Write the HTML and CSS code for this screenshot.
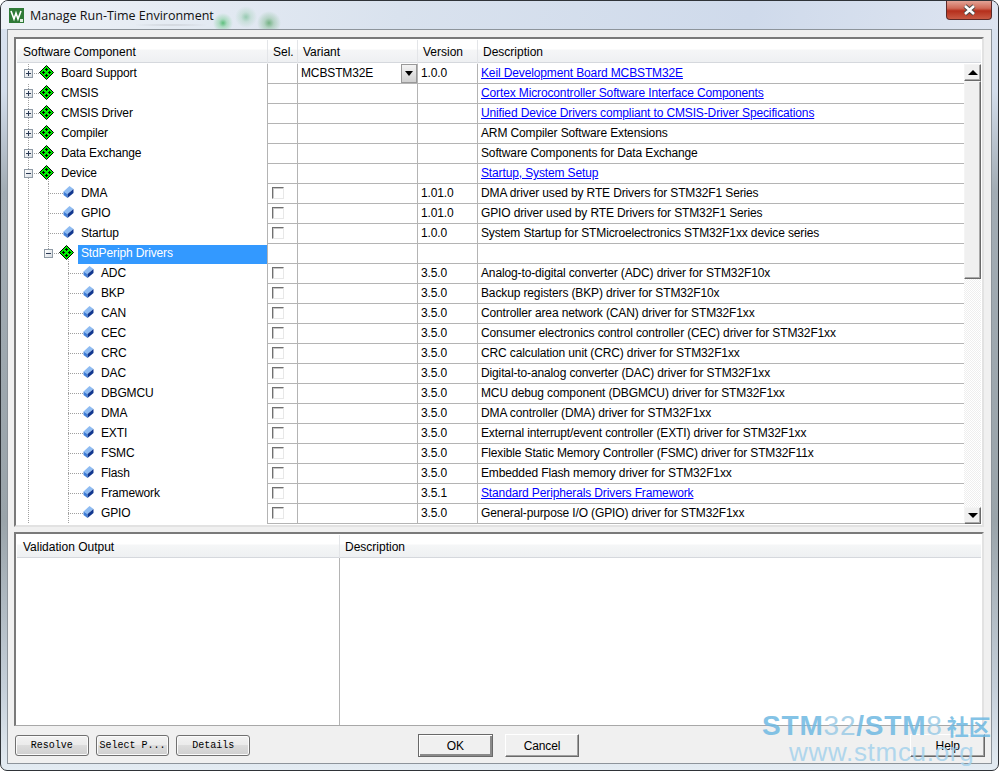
FILE: index.html
```html
<!DOCTYPE html>
<html lang="en">
<head>
    <meta charset="UTF-8">
    <title>Manage Run-Time Environment</title>
    <link rel="stylesheet" href="styles.css">
</head>
<body>
    <svg class="defs" width="0" height="0">
        <symbol id="diamond" viewBox="0 0 15 15">
            <path d="M7.5 .5 14.5 7.5 7.5 14.5 .5 7.5Z" fill="#00f000" stroke="#000"/>
            <path d="M7 3h1v1h1v1H8v1H7V5H6V4h1zM4 6h1v1h1v1H5v1H4V8H3V7h1zM10 6h1v1h1v1h-1v1h-1V8H9V7h1zM7 9h1v1h1v1H8v1H7v-1H6v-1h1z" fill="#000"/>
        </symbol>
        <symbol id="bar" viewBox="0 0 11 13">
            <path d="M6.5 0 10.5 3 4.5 8 .5 5.5Z" fill="#8fbcf2"/>
            <path d="M.5 5.5 4.5 8 4.5 12 .5 9Z" fill="#3f7fd8"/>
            <path d="M10.5 3 4.5 8 4.5 12 10.5 7Z" fill="#12388f"/>
        </symbol>
    </svg>

    <div class="window">
        <div class="titlebar">
            <svg class="app-icon" width="15" height="15" viewBox="0 0 15 15">
                <rect width="15" height="15" fill="#2f7a37"/>
                <path d="M2 3 5 11 7 5 9 11 12 3" fill="none" stroke="#fff" stroke-width="1.6"/>
                <rect x="11" y="11" width="3" height="3" fill="#dfeee0"/>
            </svg>
            <span class="title-text">Manage Run-Time Environment</span>
            <div class="close">
                <svg width="15" height="12" viewBox="0 0 15 12">
                    <path d="M3 2 12 10M12 2 3 10" stroke="#4a4a4a" stroke-width="4.4"/>
                    <path d="M3 2 12 10M12 2 3 10" stroke="#fff" stroke-width="2.6"/>
                </svg>
            </div>
        </div>

        <div class="client">
            <div class="pane pane-top">
                <div class="header comp-cols">
                    <div class="th first">Software Component</div>
                    <div class="th">Sel.</div>
                    <div class="th">Variant</div>
                    <div class="th">Version</div>
                    <div class="th last">Description</div>
                </div>
                <div class="grid-wrap">
                    <div class="rows">
                        <div class="row"><div class="tree lv0"><i class="v a top-half"></i><i class="h"></i><b class="exp plus"></b><svg class="dia"><use href="#diamond"/></svg><span class="label">Board Support</span></div><div class="cell"></div><div class="cell variant">MCBSTM32E<span class="drop"></span></div><div class="cell">1.0.0</div><div class="cell"><a href="#">Keil Development Board MCBSTM32E</a></div></div>
                        <div class="row"><div class="tree lv0"><i class="v a"></i><i class="h"></i><b class="exp plus"></b><svg class="dia"><use href="#diamond"/></svg><span class="label">CMSIS</span></div><div class="cell"></div><div class="cell"></div><div class="cell"></div><div class="cell"><a href="#">Cortex Microcontroller Software Interface Components</a></div></div>
                        <div class="row"><div class="tree lv0"><i class="v a"></i><i class="h"></i><b class="exp plus"></b><svg class="dia"><use href="#diamond"/></svg><span class="label">CMSIS Driver</span></div><div class="cell"></div><div class="cell"></div><div class="cell"></div><div class="cell"><a href="#">Unified Device Drivers compliant to CMSIS-Driver Specifications</a></div></div>
                        <div class="row"><div class="tree lv0"><i class="v a"></i><i class="h"></i><b class="exp plus"></b><svg class="dia"><use href="#diamond"/></svg><span class="label">Compiler</span></div><div class="cell"></div><div class="cell"></div><div class="cell"></div><div class="cell">ARM Compiler Software Extensions</div></div>
                        <div class="row"><div class="tree lv0"><i class="v a"></i><i class="h"></i><b class="exp plus"></b><svg class="dia"><use href="#diamond"/></svg><span class="label">Data Exchange</span></div><div class="cell"></div><div class="cell"></div><div class="cell"></div><div class="cell">Software Components for Data Exchange</div></div>
                        <div class="row"><div class="tree lv0"><i class="v a"></i><i class="v b bottom-half"></i><i class="h"></i><b class="exp"></b><svg class="dia"><use href="#diamond"/></svg><span class="label">Device</span></div><div class="cell"></div><div class="cell"></div><div class="cell"></div><div class="cell"><a href="#">Startup, System Setup</a></div></div>
                        <div class="row"><div class="tree lv1"><i class="v a"></i><i class="v b"></i><i class="h"></i><svg class="bar"><use href="#bar"/></svg><span class="label">DMA</span></div><div class="cell"><span class="check"></span></div><div class="cell"></div><div class="cell">1.01.0</div><div class="cell">DMA driver used by RTE Drivers for STM32F1 Series</div></div>
                        <div class="row"><div class="tree lv1"><i class="v a"></i><i class="v b"></i><i class="h"></i><svg class="bar"><use href="#bar"/></svg><span class="label">GPIO</span></div><div class="cell"><span class="check"></span></div><div class="cell"></div><div class="cell">1.01.0</div><div class="cell">GPIO driver used by RTE Drivers for STM32F1 Series</div></div>
                        <div class="row"><div class="tree lv1"><i class="v a"></i><i class="v b"></i><i class="h"></i><svg class="bar"><use href="#bar"/></svg><span class="label">Startup</span></div><div class="cell"><span class="check"></span></div><div class="cell"></div><div class="cell">1.0.0</div><div class="cell">System Startup for STMicroelectronics STM32F1xx device series</div></div>
                        <div class="row"><div class="tree lv2"><i class="v a"></i><i class="v b top-half"></i><i class="v c bottom-half"></i><i class="h"></i><b class="exp"></b><svg class="dia"><use href="#diamond"/></svg><span class="label selected">StdPeriph Drivers</span></div><div class="cell"></div><div class="cell"></div><div class="cell"></div><div class="cell"></div></div>
                        <div class="row"><div class="tree lv3"><i class="v a"></i><i class="v c"></i><i class="h"></i><svg class="bar"><use href="#bar"/></svg><span class="label">ADC</span></div><div class="cell"><span class="check"></span></div><div class="cell"></div><div class="cell">3.5.0</div><div class="cell">Analog-to-digital converter (ADC) driver for STM32F10x</div></div>
                        <div class="row"><div class="tree lv3"><i class="v a"></i><i class="v c"></i><i class="h"></i><svg class="bar"><use href="#bar"/></svg><span class="label">BKP</span></div><div class="cell"><span class="check"></span></div><div class="cell"></div><div class="cell">3.5.0</div><div class="cell">Backup registers (BKP) driver for STM32F10x</div></div>
                        <div class="row"><div class="tree lv3"><i class="v a"></i><i class="v c"></i><i class="h"></i><svg class="bar"><use href="#bar"/></svg><span class="label">CAN</span></div><div class="cell"><span class="check"></span></div><div class="cell"></div><div class="cell">3.5.0</div><div class="cell">Controller area network (CAN) driver for STM32F1xx</div></div>
                        <div class="row"><div class="tree lv3"><i class="v a"></i><i class="v c"></i><i class="h"></i><svg class="bar"><use href="#bar"/></svg><span class="label">CEC</span></div><div class="cell"><span class="check"></span></div><div class="cell"></div><div class="cell">3.5.0</div><div class="cell">Consumer electronics control controller (CEC) driver for STM32F1xx</div></div>
                        <div class="row"><div class="tree lv3"><i class="v a"></i><i class="v c"></i><i class="h"></i><svg class="bar"><use href="#bar"/></svg><span class="label">CRC</span></div><div class="cell"><span class="check"></span></div><div class="cell"></div><div class="cell">3.5.0</div><div class="cell">CRC calculation unit (CRC) driver for STM32F1xx</div></div>
                        <div class="row"><div class="tree lv3"><i class="v a"></i><i class="v c"></i><i class="h"></i><svg class="bar"><use href="#bar"/></svg><span class="label">DAC</span></div><div class="cell"><span class="check"></span></div><div class="cell"></div><div class="cell">3.5.0</div><div class="cell">Digital-to-analog converter (DAC) driver for STM32F1xx</div></div>
                        <div class="row"><div class="tree lv3"><i class="v a"></i><i class="v c"></i><i class="h"></i><svg class="bar"><use href="#bar"/></svg><span class="label">DBGMCU</span></div><div class="cell"><span class="check"></span></div><div class="cell"></div><div class="cell">3.5.0</div><div class="cell">MCU debug component (DBGMCU) driver for STM32F1xx</div></div>
                        <div class="row"><div class="tree lv3"><i class="v a"></i><i class="v c"></i><i class="h"></i><svg class="bar"><use href="#bar"/></svg><span class="label">DMA</span></div><div class="cell"><span class="check"></span></div><div class="cell"></div><div class="cell">3.5.0</div><div class="cell">DMA controller (DMA) driver for STM32F1xx</div></div>
                        <div class="row"><div class="tree lv3"><i class="v a"></i><i class="v c"></i><i class="h"></i><svg class="bar"><use href="#bar"/></svg><span class="label">EXTI</span></div><div class="cell"><span class="check"></span></div><div class="cell"></div><div class="cell">3.5.0</div><div class="cell">External interrupt/event controller (EXTI) driver for STM32F1xx</div></div>
                        <div class="row"><div class="tree lv3"><i class="v a"></i><i class="v c"></i><i class="h"></i><svg class="bar"><use href="#bar"/></svg><span class="label">FSMC</span></div><div class="cell"><span class="check"></span></div><div class="cell"></div><div class="cell">3.5.0</div><div class="cell">Flexible Static Memory Controller (FSMC) driver for STM32F11x</div></div>
                        <div class="row"><div class="tree lv3"><i class="v a"></i><i class="v c"></i><i class="h"></i><svg class="bar"><use href="#bar"/></svg><span class="label">Flash</span></div><div class="cell"><span class="check"></span></div><div class="cell"></div><div class="cell">3.5.0</div><div class="cell">Embedded Flash memory driver for STM32F1xx</div></div>
                        <div class="row"><div class="tree lv3"><i class="v a"></i><i class="v c"></i><i class="h"></i><svg class="bar"><use href="#bar"/></svg><span class="label">Framework</span></div><div class="cell"><span class="check"></span></div><div class="cell"></div><div class="cell">3.5.1</div><div class="cell"><a href="#">Standard Peripherals Drivers Framework</a></div></div>
                        <div class="row"><div class="tree lv3"><i class="v a"></i><i class="v c"></i><i class="h"></i><svg class="bar"><use href="#bar"/></svg><span class="label">GPIO</span></div><div class="cell"><span class="check"></span></div><div class="cell"></div><div class="cell">3.5.0</div><div class="cell">General-purpose I/O (GPIO) driver for STM32F1xx</div></div>
                    </div>
                    <div class="scrollbar">
                        <div class="sb-btn"><span class="tri-up"></span></div>
                        <div class="sb-thumb"></div>
                        <div class="sb-track"></div>
                        <div class="sb-btn"><span class="tri-down"></span></div>
                    </div>
                </div>
            </div>

            <div class="pane pane-bottom">
                <div class="header val-cols">
                    <div class="th first">Validation Output</div>
                    <div class="th last">Description</div>
                </div>
                <div class="val-body">
                    <div class="val-left"></div>
                    <div class="val-right"></div>
                </div>
            </div>

            <div class="buttons">
                <button class="btn-small">Resolve</button>
                <button class="btn-small">Select P...</button>
                <button class="btn-small">Details</button>
                <button class="btn-main btn-default">OK</button>
                <button class="btn-main">Cancel</button>
                <button class="btn-main btn-help">Help</button>
            </div>
        </div>

        <div class="watermark">
            <div class="wm-top"><b>STM</b><span class="wm-thin">32</span><b>/STM</b><span class="wm-thin">8</span><b class="wm-cjk">社区</b></div>
            <div class="wm-url">www.stmcu.org</div>
        </div>
    </div>
</body>
</html>
```

FILE: styles.css
```css
* {
    box-sizing: border-box;
}
body {
    margin: 0;
    background: #fff;
    font-family: "Liberation Sans", Arial, sans-serif;
    font-size: 12px;
    color: #000;
}
.defs {
    position: absolute;
}

/* window frame */
.window {
    position: relative;
    width: 999px;
    height: 771px;
    overflow: hidden;
    border: 1px solid #2f3338;
    border-radius: 8px 8px 7px 7px;
    background: linear-gradient(to bottom, #dbe4f1 0, #d3ddeb 90px, #a2acb4 190px, #9aa4aa 520px, #c6d0da 690px, #e4ecf3 100%);
}
.titlebar {
    display: flex;
    align-items: center;
    height: 28px;
    padding-left: 8px;
    background:
        radial-gradient(circle at 222px 22px, rgba(60,180,95,.8) 0, rgba(75,192,106,.35) 4px, rgba(75,192,106,0) 10px),
        radial-gradient(circle at 245px 16px, rgba(120,190,150,.7) 0, rgba(143,201,164,.3) 5px, rgba(143,201,164,0) 11px),
        radial-gradient(circle at 268px 22px, rgba(90,165,105,.8) 0, rgba(99,171,112,.35) 5px, rgba(99,171,112,0) 12px),
        radial-gradient(ellipse at 170px 24px, #c9cdd4 0, rgba(201,205,212,0) 40px),
        linear-gradient(100deg, #eef2f7 0, #d9e2ee 40%, #cfdaeb 75%, #dde4f0 100%);
}
.app-icon {
    flex: none;
}
.title-text {
    margin-left: 6px;
    font-family: "Open Sans", sans-serif;
    font-size: 12.5px;
    color: #111;
}
.close {
    display: flex;
    align-items: center;
    justify-content: center;
    width: 46px;
    height: 19px;
    margin-left: auto;
    margin-right: 6px;
    margin-top: -9px;
    border: 1px solid #5c2a28;
    border-top: none;
    border-radius: 0 0 4px 4px;
    background: linear-gradient(to bottom, #e3a396 0, #cf6a58 40%, #b52f1c 55%, #c85a44 100%);
}

/* client area */
.client {
    width: 985px;
    height: 735px;
    margin-left: 6px;
    padding: 7px 6px 0;
    border: 1px solid #8d949b;
    background: #f0f0f0;
}
.pane {
    width: 970px;
    padding: 1px;
    border: 2px solid;
    border-color: #7a7a7a #e2e2e2 #e2e2e2 #7a7a7a;
    background: #fff;
}
.pane-top {
    height: 490px;
}
.pane-bottom {
    height: 194px;
    margin-top: 5px;
    border-bottom: 1px solid #a8a8a8;
}

/* headers */
.header {
    display: grid;
    height: 23px;
    border-bottom: 1px solid #d5d8dd;
    background: linear-gradient(to bottom, #fff 0, #fff 9px, #f5f6f7 10px, #eef0f2 100%);
}
.comp-cols {
    grid-template-columns: 251px 30px 120px 60px 1fr;
}
.val-cols {
    grid-template-columns: 323px 1fr;
}
.th {
    padding-left: 5px;
    line-height: 24px;
    border-right: 1px solid #e3e5e8;
}
.th.first {
    padding-left: 6px;
}
.th.last {
    border-right: none;
}

/* component table */
.grid-wrap {
    display: flex;
    margin-top: 1px;
    height: 460px;
}
.rows {
    flex: 1;
    overflow: hidden;
    letter-spacing: -.13px;
}
.row {
    display: grid;
    grid-template-columns: 251px 30px 120px 60px 1fr;
    height: 20px;
}
.cell {
    position: relative;
    padding-left: 3px;
    line-height: 18px;
    white-space: nowrap;
    border-right: 1px solid #b4b4b4;
    border-bottom: 1px solid #b4b4b4;
}
.cell:last-child {
    border-right: none;
}
.cell a {
    color: #0000ff;
}
.variant {
    padding-left: 3px;
}
.drop {
    position: absolute;
    right: 0;
    top: 0;
    width: 16px;
    height: 19px;
    border: 1px solid #666;
    border-color: #fff #555 #555 #fff;
    outline: 1px solid #999;
    outline-offset: -1px;
    background: linear-gradient(to bottom, #f4f4f4, #d0d0d0);
}
.drop::after {
    content: "";
    position: absolute;
    left: 3px;
    top: 6px;
    border: 4px solid transparent;
    border-top: 5px solid #000;
    border-bottom: none;
}
.check {
    display: block;
    width: 12px;
    height: 12px;
    margin: 3px 0 0 1px;
    border: 1px solid;
    border-color: #707070 #e8e8e8 #e8e8e8 #707070;
    background: #fff;
    box-shadow: inset 1px 1px 0 #c8c8c8;
}

/* tree column */
.tree {
    position: relative;
    display: flex;
    align-items: center;
    height: 20px;
    border-right: 1px solid #b4b4b4;
}
.lv0 { padding-left: 7px; }
.lv1 { padding-left: 46px; }
.lv2 { padding-left: 27px; }
.lv3 { padding-left: 66px; }
.tree svg, .exp {
    position: relative;
    flex: none;
}
.tree svg.dia {
    width: 15px;
    height: 15px;
    margin: -3px 0 0 6px;
}
.tree svg.bar {
    width: 11px;
    height: 13px;
    margin-top: -4px;
}
.label {
    position: relative;
    margin: -2px 0 0 7px;
    line-height: 18px;
    white-space: nowrap;
}
.label.selected {
    flex: 1;
    margin: 0 0 0 4px;
    padding-left: 3px;
    height: 19px;
    line-height: 17px;
    background: #3399ff;
    color: #fff;
}
.exp {
    width: 9px;
    height: 9px;
    margin-top: -1px;
    border: 1px solid #8f9aa5;
    background: linear-gradient(135deg, #fff, #d8dde2);
}
.exp::before {
    content: "";
    position: absolute;
    left: 1px;
    top: 3px;
    width: 5px;
    height: 1px;
    background: #2a3a55;
}
.exp.plus::after {
    content: "";
    position: absolute;
    left: 3px;
    top: 1px;
    width: 1px;
    height: 5px;
    background: #2a3a55;
}

/* dotted connector lines sit under the tree icons */
.v, .h {
    position: absolute;
}
.v {
    top: 0;
    bottom: 0;
    width: 1px;
    background: repeating-linear-gradient(to bottom, #a0a0a0 0 1px, transparent 1px 2px);
}
.v.a { left: 11px; }
.v.b { left: 31px; }
.v.c { left: 51px; }
.v.top-half { bottom: 10px; }
.v.bottom-half { top: 9px; }
.h {
    top: 9px;
    height: 1px;
    background: repeating-linear-gradient(to right, #a0a0a0 0 1px, transparent 1px 2px);
}
.lv0 .h { left: 11px; width: 12px; }
.lv1 .h { left: 31px; width: 15px; }
.lv2 .h { left: 31px; width: 12px; }
.lv3 .h { left: 51px; width: 15px; }

/* scrollbar */
.scrollbar {
    display: flex;
    flex-direction: column;
    flex: none;
    width: 17px;
}
.sb-btn, .sb-thumb {
    flex: none;
    border: 1px solid;
    border-color: #f4f4f4 #6a6a6a #6a6a6a #f4f4f4;
    background: #f0f0f0;
    box-shadow: inset -1px -1px 0 #a8a8a8;
}
.sb-btn {
    display: flex;
    align-items: center;
    justify-content: center;
    height: 17px;
}
.sb-thumb {
    height: 198px;
}
.sb-track {
    flex: 1;
    background: repeating-conic-gradient(#eeeeee 0 25%, #fff 0 50%) 0 0 / 2px 2px;
}
.tri-up, .tri-down {
    border: 5px solid transparent;
}
.tri-up {
    border-bottom: 5px solid #000;
    border-top: none;
}
.tri-down {
    border-top: 5px solid #000;
    border-bottom: none;
}

/* validation pane */
.val-body {
    display: flex;
    height: 167px;
}
.val-left {
    width: 323px;
    border-right: 1px solid #b4b4b4;
}
.val-right {
    flex: 1;
}

/* bottom buttons */
.buttons {
    position: relative;
    display: flex;
    align-items: flex-start;
    margin-top: 8px;
    padding-left: 1px;
}
.btn-small {
    width: 74px;
    height: 21px;
    margin: 1px 7px 0 0;
    padding: 0;
    border: 1px solid #707070;
    border-radius: 3px;
    background: linear-gradient(to bottom, #f2f2f2 0, #ebebeb 45%, #dcdcdc 50%, #cfcfcf 100%);
    box-shadow: inset 0 0 0 1px #fbfbfb;
    font-family: "Liberation Mono", monospace;
    font-size: 10px;
    color: #000;
}
.btn-main {
    width: 75px;
    height: 23px;
    padding: 0;
    border: 1px solid;
    border-color: #fff #696969 #696969 #fff;
    background: #f0f0f0;
    box-shadow: inset -1px -1px 0 #a0a0a0;
    font-family: "Liberation Sans", Arial, sans-serif;
    font-size: 12px;
    letter-spacing: -.13px;
    color: #000;
}
.btn-default {
    margin-left: 161px;
    border-color: #696969;
    box-shadow: inset 1px 1px 0 #fff, inset -2px -2px 0 #8a8a8a;
}
.btn-main + .btn-main {
    margin-left: 12px;
}
.btn-main.btn-help {
    margin-left: 331px;
}

/* watermark over the window */
.watermark {
    position: absolute;
    left: 761px;
    top: 711px;
    color: #6fb9e2;
    opacity: .85;
    font-family: "Liberation Sans", Arial, sans-serif;
    line-height: 1;
    white-space: nowrap;
    pointer-events: none;
}
.wm-top {
    font-size: 28px;
    height: 28px;
    letter-spacing: .8px;
}
.wm-thin {
    color: #9ccbe6;
}
.wm-cjk {
    margin-left: 4px;
    font-family: "Noto Sans CJK SC", sans-serif;
    font-size: 22px;
    letter-spacing: 0;
}
.wm-url {
    margin: -1px 0 0 27px;
    color: #a5d2ec;
    font-size: 26px;
    letter-spacing: .7px;
}
```
